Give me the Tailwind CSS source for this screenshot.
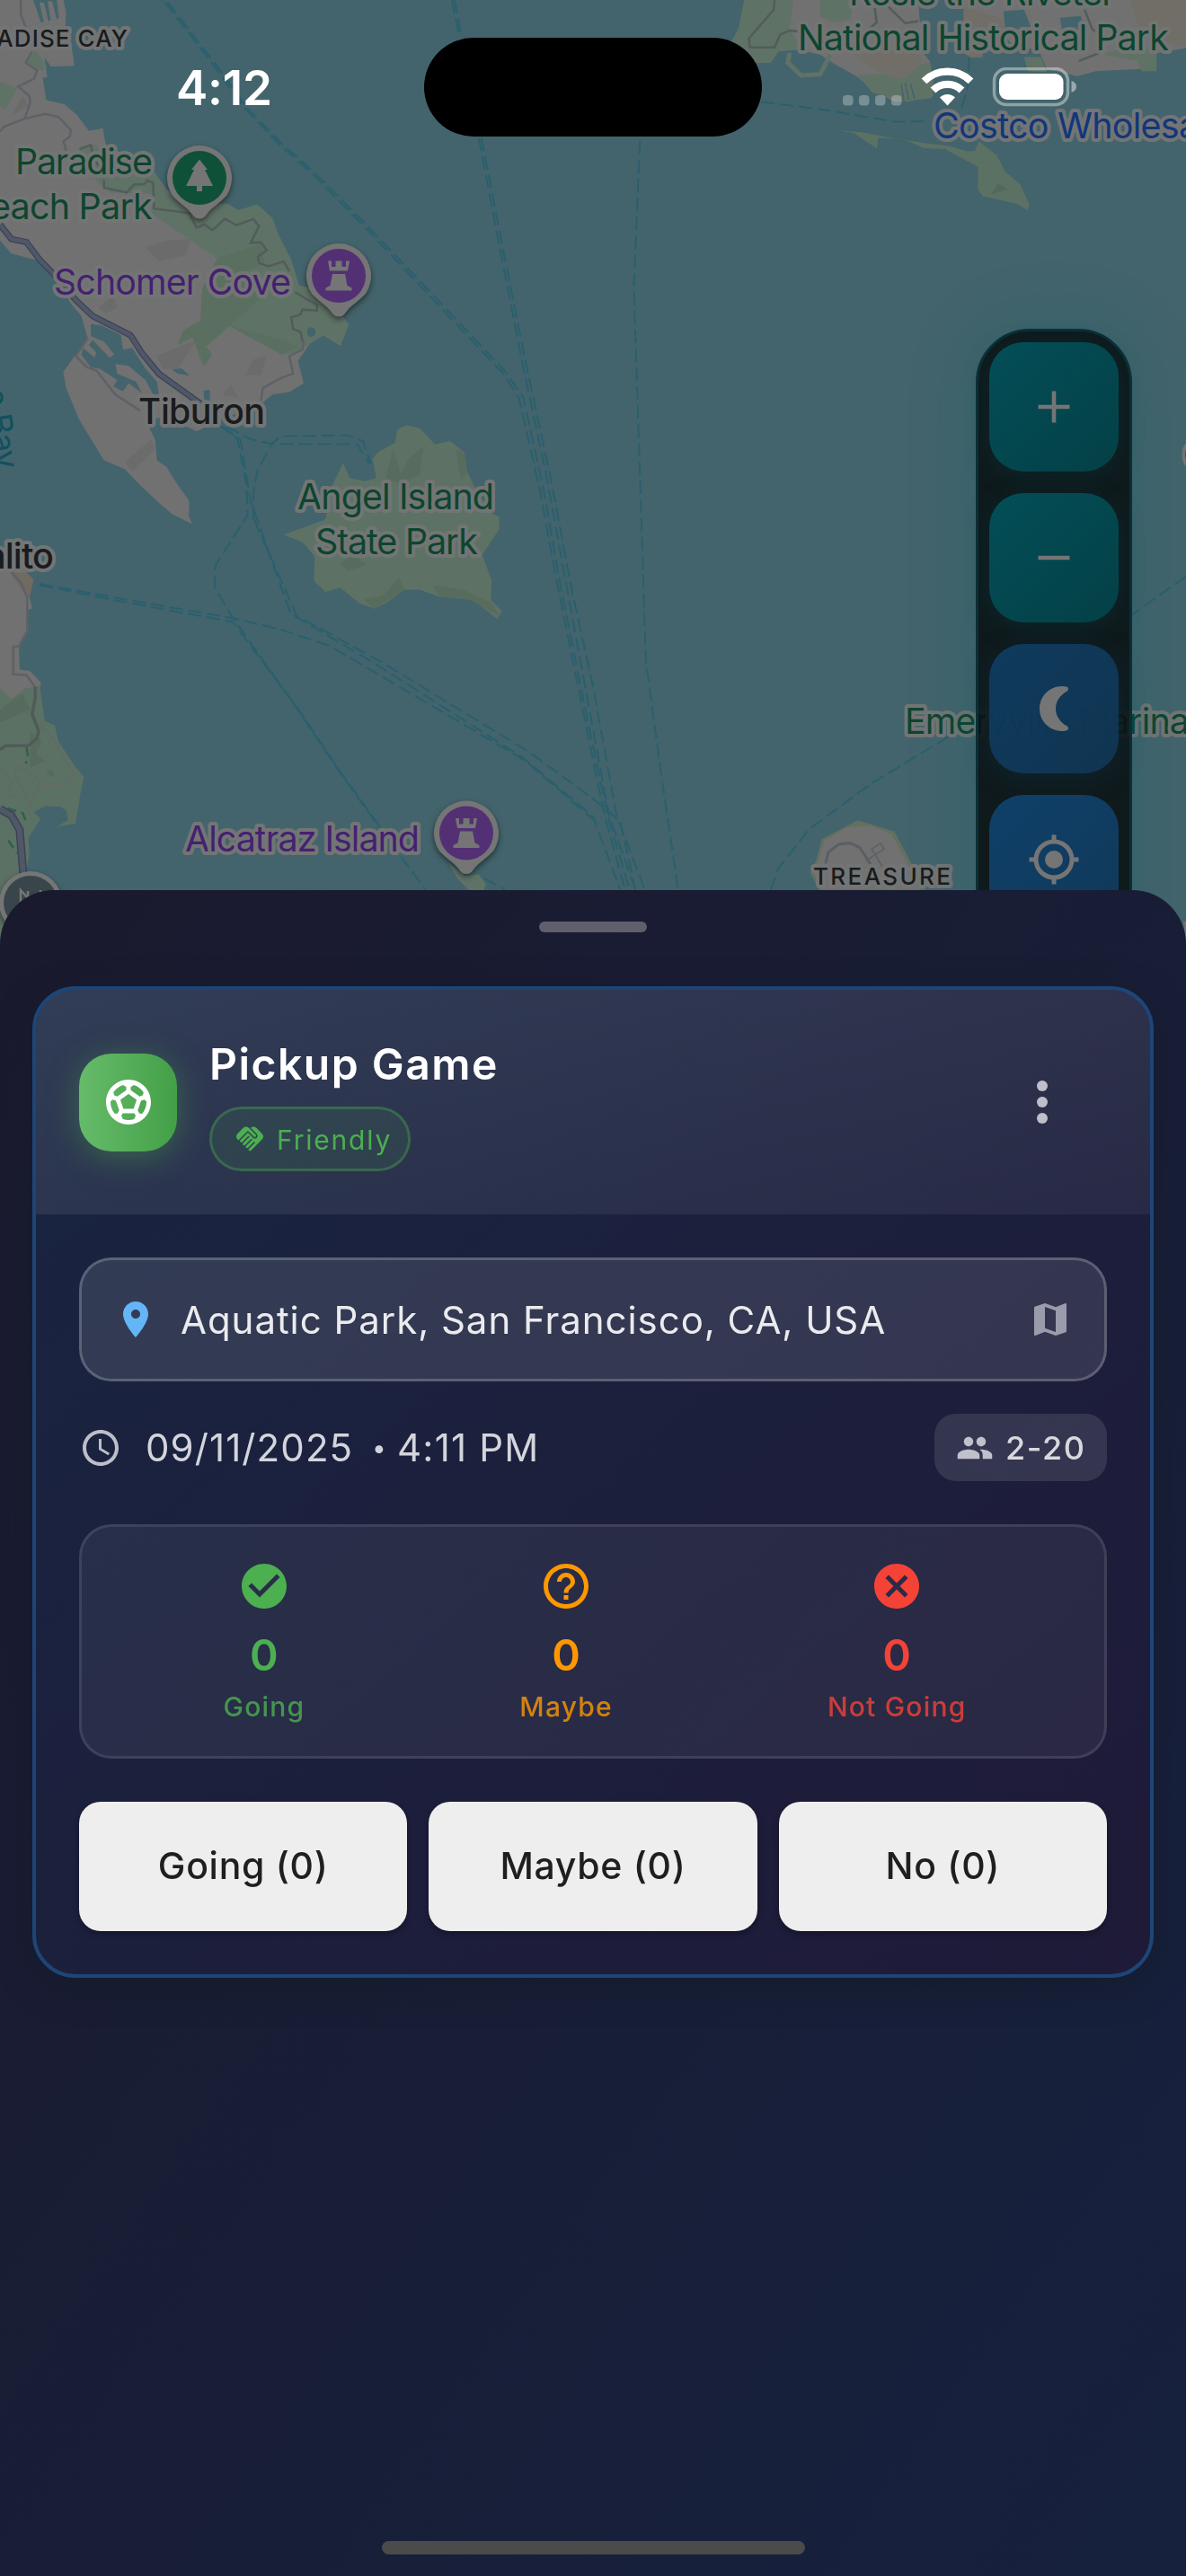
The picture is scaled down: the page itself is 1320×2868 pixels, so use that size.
<!DOCTYPE html>
<html lang="en">
<head>
<meta charset="utf-8">
<title>Pickup Game</title>
<script src="https://cdn.jsdelivr.net/npm/@tailwindcss/browser@4"></script>
</head>
<body class="bg-[#1a1a2e] font-['Inter',sans-serif]">
<div class="relative flex h-[2868px] w-[1320px] flex-col overflow-hidden">

  <!-- Map backdrop -->
  <svg class="absolute left-0 top-0 h-[1060px] w-[1320px]" viewBox="0 0 3136 2968" preserveAspectRatio="none">
    <rect width="3136" height="2968" fill="#43646c"/>
    <!-- Tiburon peninsula -->
    <path fill="#717171" d="M0 0H88L108 70 116 68 104 8 116 8 128 66 134 64 126 4 138 4 150 60 156 56 150 0H168L175 40 172 100 190 150 197 205 135 208 118 180 125 240 113 242 122 312 170 325 205 360 235 408 272 400 280 455 330 480 410 540 440 590 500 640 600 635 630 655 680 638 720 680 735 730 770 810 790 890 830 900 905 985 922 1010 900 1078 855 1045 820 1070 788 1125 803 1195 765 1222 720 1230 690 1260 600 1300 520 1345 440 1300 385 1310 410 1370 415 1435 440 1455 470 1512 500 1560 500 1600 497 1600 508 1634 455 1602 420 1567 370 1512 330 1462 275 1435 210 1310 175 1210 167 1160 200 1105 232 1055 215 985 190 950 150 880 100 812 30 790 0 750Z"/>
    <path fill="#666666" fill-opacity=".5" d="M385 770 440 750 505 745 490 795 420 815ZM30 360 60 300 75 330ZM260 960 300 920 310 960 280 975ZM415 1110 485 1075 520 1060 470 1150 430 1150ZM650 1170 670 1120 705 1110 690 1170ZM590 1230 610 1200 630 1240ZM330 1440 400 1370 410 1400 350 1470Z"/>
    <path fill="#43646c" d="M240 1010 270 1015 320 1045 325 1090 350 1085 385 1150 415 1190 420 1230 405 1230 385 1185 340 1140 305 1135 310 1165 360 1190 375 1225 340 1195 325 1220 300 1205 310 1185 265 1150 240 1145 215 1105 220 1085 250 1115 255 1100 235 1075 245 1060 290 1115 302 1105 275 1065 240 1048ZM455 1152 480 1148 502 1172 470 1165ZM538 1218 555 1215 555 1250 540 1245Z"/>
    <path fill="#5f7266" d="M210 465 250 450 275 475 410 540 440 600 500 640 600 635 630 655 680 638 720 680 735 730 770 810 790 890 830 900 922 1010 900 1078 855 1045 820 1070 788 1100 745 1105 605 1015 545 1080 560 1105 540 1140 525 1110 510 1050 470 1075 485 1030 530 1000 535 900 575 805 400 665 405 605 290 600 240 545ZM70 190 95 158 120 200 115 222 75 205ZM0 255 45 275 15 340 0 330Z"/>
    <path fill="#5a6f5f" d="M575 805 690 760 700 820 640 850 690 930 545 1080 560 1105 540 1140 510 1050 470 1075 485 1030 530 1000 535 900ZM605 1015 745 1060 790 1080 745 1105Z"/>
    <ellipse cx="823" cy="1035" rx="11" ry="15" fill="#43646c"/>
    <g fill="none" stroke="#5e6167" stroke-width="2.5">
      <path vector-effect="non-scaling-stroke" d="M55 0V45L68 85M85 160 68 195 98 220 90 245 48 270 78 300 80 320 65 370 10 395 0 410M65 370 120 355 155 365 187 405 185 425 168 440 175 470M232 1055 200 1110 230 1145 255 1155 305 1230 370 1280M803 1060 800 1090 765 1110 775 1165 740 1180 695 1210 690 1250"/>
      <path vector-effect="non-scaling-stroke" stroke="#525d5a" d="M210 465 240 452 250 500 270 530M275 560 275 585 335 600 355 575 380 575 390 563 405 570 407 650 440 655 475 660 500 665 520 710 540 700 562 717 595 682 625 702 670 683 685 705 663 757 690 755 705 780 682 800 685 820 710 830 750 815 765 845M780 910 800 925 838 950 838 968 800 965 795 980 770 990 775 1025 795 1035 800 1065"/>
    </g>
    <path vector-effect="non-scaling-stroke" fill="none" stroke="#3c4257" stroke-width="7" d="M0 700 30 745 70 755 105 810 155 870 200 935 245 985 345 1045 375 1100 420 1165 530 1258"/>
    <path vector-effect="non-scaling-stroke" fill="none" stroke="#505868" stroke-width="4.5" d="M0 700 30 745 70 755 105 810 155 870 200 935 245 985 345 1045 375 1100 420 1165 530 1258"/>
    <!-- Angel Island -->
    <path fill="#5d7265" d="M1075 1325 1110 1335 1150 1385 1190 1375 1228 1410 1235 1470 1255 1520 1300 1600 1320 1612 1320 1650 1275 1730 1300 1810 1298 1870 1327 1905 1315 1930 1250 1870 1160 1860 1110 1838 1070 1838 1020 1880 990 1898 950 1880 900 1832 860 1845 830 1810 832 1735 800 1690 750 1667 860 1620 880 1510 907 1443 925 1490 965 1500 995 1490 985 1430 1000 1410 1045 1380 1050 1340Z"/>
    <path fill="#586c5e" d="M1040 1400 1060 1480 1080 1430 1120 1390 1110 1480 1060 1510 1020 1490ZM1205 1400 1228 1410 1235 1470 1220 1500ZM1145 1825 1230 1840 1300 1880 1320 1920 1240 1868 1160 1858ZM960 1870 1015 1855 1055 1800 1070 1838 990 1898ZM900 1760 930 1730 970 1760 920 1780Z"/>
    <!-- Alcatraz -->
    <path fill="#5f7266" d="M1185 2690 1230 2730 1265 2725 1285 2755 1280 2775 1240 2775 1210 2740Z"/>
    <!-- Sausalito and headlands -->
    <g transform="translate(0 1512)">
      <path fill="#717171" d="M0 240 60 260 88 295 78 350 85 385 72 390 75 455 50 505 52 575 80 580 108 615 105 640 118 735 0 760Z"/>
      <path fill="#716a60" d="M25 270 72 275 88 295 78 350 68 345Z"/>
      <path fill="#5b7163" d="M0 635 30 668 65 635 105 625 118 735 145 750 155 800 200 880 222 910 213 960 200 1055 148 1066 180 1045 175 1015 160 1003 120 1000 90 1020 108 1040 75 1100 78 1150 70 1200 160 1456H0Z"/>
      <path fill="#566b5c" d="M80 770 110 800 95 840 120 860 80 880ZM0 700 60 650 80 700 0 740ZM120 900 135 885 145 910Z"/>
      <g fill="none" stroke="#5e6167" stroke-width="2.5">
        <path vector-effect="non-scaling-stroke" d="M30 270 55 305 72 350V455L50 502 35 505V590L70 592 93 630"/>
        <path vector-effect="non-scaling-stroke" stroke="#505b58" stroke-width="3.5" d="M93 630V665L85 715 102 765 98 790 75 812 15 813 0 825"/>
        <path vector-effect="non-scaling-stroke" stroke="#646964" stroke-width="1.5" d="M100 740 130 775 150 810 170 850 195 900 180 933H105L80 998 38 900 50 877 95 910 105 933M0 880 30 920V945L15 965 40 975"/>
      </g>
      <path vector-effect="non-scaling-stroke" fill="none" stroke="#3c4257" stroke-width="9" d="M0 1010 30 1030 52 1075 62 1220"/>
      <path vector-effect="non-scaling-stroke" fill="none" stroke="#505868" stroke-width="6" d="M0 1010 30 1030 52 1075 62 1220"/>
    </g>
    <!-- Richmond shoreline -->
    <g transform="translate(1568 0)">
      <path fill="#717171" d="M400 0 385 90 365 130 430 195 470 195 490 160 540 155 600 170 640 200 700 240 750 290 800 318 895 305 900 250 890 190 870 160 860 0H980V165L1000 180 1030 178 1030 110 1090 95 1100 130 1180 160 1200 215 1280 238 1330 222 1450 215 1490 222 1490 165 1568 150V0Z"/>
      <path fill="#5f7266" d="M400 0H530L520 90 550 150 490 160 470 195 430 197 365 130 385 90ZM600 0H690L680 60 640 70 600 50ZM700 235 760 230 820 245 870 200 892 195 900 300 830 318 740 290ZM1140 178H1185L1200 225 1150 222ZM1400 150H1490V222H1450L1440 190 1350 170Z"/>
      <path fill="#716d67" d="M690 170 800 160 865 170 868 200 825 245 770 235ZM980 20 1085 60V100L1030 130V178H1000L980 160ZM1420 0H1568V150L1450 110Z"/>
      <path fill="#43646c" d="M1235 55 1290 50 1300 95 1240 95ZM1085 35 1140 30 1160 90 1090 92Z"/>
      <path vector-effect="non-scaling-stroke" fill="none" stroke="#525d5a" stroke-width="2.5" d="M480 0 478 30 412 120 415 148 480 148 495 108 520 95 560 100M745 25 750 70 700 120M1300 30 1320 90 1350 120 1350 160 1285 190M780 20 825 72 860 66"/>
      <path vector-effect="non-scaling-stroke" fill="none" stroke="#5f7266" stroke-width="5" d="M520 165 515 195 550 235 600 232 628 170"/>
      <path vector-effect="non-scaling-stroke" fill="none" stroke="#43646c" stroke-width="1.5" d="M815 262 822 315M825 258 835 310M840 262 850 308"/>
      <path fill="#5b7163" d="M650 407 690 415 750 463 755 430 820 433 875 462 930 465 1018 520V590L1030 612 1120 635 1148 655 1155 640 1130 575 1090 535 1068 485 1020 440 1010 470 990 472 940 455 870 445 780 428 710 412Z"/>
      <path fill="#54695a" d="M1070 572 1098 590 1052 606Z"/>
    </g>
    <!-- Treasure Island -->
    <g transform="translate(1568 1512)">
      <path fill="#64705f" d="M700 1045 797 1080 842 1180 880 1262H598L575 1210 590 1170 606 1103Z"/>
      <path fill="#717171" d="M670 1068 735 1062 790 1090 832 1180 865 1262H605L583 1210 600 1160 612 1108Z"/>
      <path vector-effect="non-scaling-stroke" fill="none" stroke="#5b5e64" stroke-width="3" d="M615 1180 622 1145 650 1120 680 1116 705 1130 725 1165 735 1185"/>
      <path vector-effect="non-scaling-stroke" fill="none" stroke="#5b5e64" stroke-width="1.5" d="M722 1170 770 1135 760 1117 737 1135 747 1153 765 1190"/>
      <path fill="#717171" d="M1560 1360H1580V1420H1568Z"/>
    </g>
    <!-- Ferry routes -->
    <g fill="none" stroke="#2a5f6e" stroke-width="2" stroke-dasharray="15 6">
      <path vector-effect="non-scaling-stroke" d="M437 8 572 215 645 335 740 452 830 547 960 702 1120 902 1330 1164 1372 1240 1428 1530 1470 1800 1530 2150 1598 2540 1653 2774"/>
      <path vector-effect="non-scaling-stroke" d="M444 8 578 212 652 335 745 448 836 543 966 698 1126 896 1336 1158 1384 1240 1438 1530 1478 1800 1537 2150 1606 2540 1665 2774"/>
      <path vector-effect="non-scaling-stroke" d="M1195 0 1213 105M1266 430 1326 800 1381 1130 1446 1490 1500 1840 1555 2190 1610 2540 1680 2774"/>
      <path vector-effect="non-scaling-stroke" d="M1202 0 1220 112M1273 430 1334 800 1390 1130 1456 1490 1512 1840 1568 2140 1630 2540 1705 2774"/>
      <path vector-effect="non-scaling-stroke" d="M1692 440 1676 900 1693 1512 1708 2062 1748 2412 1793 2774"/>
      <path vector-effect="non-scaling-stroke" d="M2013 318 2168 340 2368 380 2453 378M2563 180 2558 280 2540 345"/>
      <path vector-effect="non-scaling-stroke" d="M580 1325 628 1368 652 1512 655 1605 570 1762 567 1830 615 1925 780 2200 900 2410 1010 2590 1125 2774"/>
      <path vector-effect="non-scaling-stroke" d="M590 1330 636 1372 662 1560 768 1912 1000 2075 1380 2360 1568 2545 1640 2774"/>
      <path vector-effect="non-scaling-stroke" d="M670 1620 670 1540 680 1470 720 1380 745 1360 920 1357 960 1375 980 1445M600 1330 660 1368 720 1384 945 1385 975 1445"/>
      <path vector-effect="non-scaling-stroke" d="M672 1620 785 1920 1010 2065 1400 2345 1568 2490 1640 2560 1680 2774M105 1820 300 1862 615 1927 740 1962 870 2012 1000 2102 1390 2372 1568 2555M105 1824 300 1870 615 1939 786 2206 906 2416 1016 2596"/>
      <path vector-effect="non-scaling-stroke" d="M3136 1797 2998 1912 2880 2000M2508 2297 2298 2447 2138 2587 2058 2707 2038 2774M1280 2737 1335 2774"/>
    </g>
    <g fill="none" stroke="#315f4c" stroke-width="2.5" stroke-dasharray="10 6">
      <path vector-effect="non-scaling-stroke" d="M70 2330 75 2365 68 2380M20 2520 60 2535 72 2570M22 2620 45 2660"/>
    </g>
  </svg>

  <!-- Map labels and pins -->
  <svg class="absolute left-0 top-0 h-[1060px] w-[1320px]" viewBox="0 0 1320 1060">
    <defs>
      <g id="pin">
        <path d="M0 45.500C-3 45.500-5 44.500-7 42-14 32-22 29-30 20A36 36 0 1 1 30 20C22 29 14 32 7 42 5 44.500 3 45.500 0 45.500Z" fill="#757575"/>
      </g>
      <g id="rook" fill="#757575">
        <path d="M-12-16.500H-8V-10H-3.500V-16.500H3.500V-10H8V-16.500H12L10-5.500H-10ZM-7-2H7L9.500 11 14.500 13.500V16.500H-14.500V13.500L-9.500 11Z"/>
      </g>
    </defs>
    <g font-size="39.500" stroke="#737575" stroke-width="8" stroke-linejoin="round" paint-order="stroke" fill="#0d452f">
      <text x="17" y="193.500" textLength="153">Paradise</text>
      <text x="169" y="244" text-anchor="end" letter-spacing="-.8">Beach Park</text>
      <text x="60" y="327.500" textLength="264" fill="#442170">Schomer Cove</text>
      <text x="331" y="566.500" textLength="219">Angel Island</text>
      <text x="351" y="617" textLength="181">State Park</text>
      <text x="206" y="948" textLength="261" fill="#442170">Alcatraz Island</text>
      <text x="945" y="5.500" textLength="296">Rosie the Riveter</text>
      <text x="888" y="56" textLength="413">National Historical Park</text>
      <text x="1039" y="153.500" fill="#12377a" letter-spacing="-.75">Costco Wholesale</text>
      <text x="1007" y="817" textLength="317">Emeryville Marina</text>
      <text x="1317" y="521">G</text>
      <g fill="#1a1b1d" font-weight="500">
        <text x="154" y="472" textLength="141">Tiburon</text>
        <text x="59" y="633" text-anchor="end" letter-spacing="-.9">Sausalito</text>
        <text x="143" y="52" font-size="26" text-anchor="end" letter-spacing="1.1">PARADISE CAY</text>
        <text x="905" y="985" font-size="26" textLength="153">TREASURE</text>
      </g>
    </g>
    <text transform="translate(-18 434) rotate(81)" font-size="36" letter-spacing="-1" fill="#12505f">e Bay</text>
    <g class="drop-shadow-[0_3px_3px_rgba(0,0,0,0.5)]">
      <use href="#pin" x="222" y="198"/>
      <use href="#pin" x="377" y="307"/>
      <use href="#pin" x="519" y="927.500"/>
      <circle cx="34" cy="1005" r="35" fill="#757575"/>
    </g>
    <circle cx="222" cy="198" r="30" fill="#0f5138"/>
    <path d="M222 177.500 231 189H228L237 207H225V213H219V207H207L216 189H213Z" fill="#757575"/>
    <circle cx="377" cy="307" r="30" fill="#533074"/><use href="#rook" x="377" y="307"/>
    <circle cx="519" cy="927.500" r="30" fill="#533074"/><use href="#rook" x="519" y="927.500"/>
    <circle cx="34" cy="1005" r="30" fill="#38464c"/>
    <path d="M23 1006V991L31 1000V992M40 1000V996M45 998V991" stroke="#757575" stroke-width="2.500" fill="none"/>
  </svg>

  <!-- Map controls -->
  <div class="absolute left-[1086px] top-[366px] flex h-[820px] w-[174px] flex-col items-center gap-6 rounded-[60px] border-[3px] border-[#0b2f35] bg-[#060d0e]/85 pt-3 shadow-[0_0_70px_8px_rgba(0,95,105,0.2)]">
    <div class="flex size-36 shrink-0 items-center justify-center rounded-[38px] bg-linear-to-br from-[#034e58] to-[#044046] shadow-[0_6px_28px_rgba(10,60,70,0.35)]">
      <svg class="size-9" viewBox="0 0 36 36"><path d="M18 .5V35.500M.5 18H35.500" stroke="#757575" stroke-width="4.600"/></svg>
    </div>
    <div class="flex size-36 shrink-0 items-center justify-center rounded-[38px] bg-linear-to-br from-[#034e58] to-[#044046] shadow-[0_6px_28px_rgba(10,60,70,0.35)]">
      <svg class="size-9" viewBox="0 0 36 36"><path d="M.5 18H35.500" stroke="#757575" stroke-width="4.600"/></svg>
    </div>
    <div class="flex size-36 shrink-0 items-center justify-center rounded-[38px] bg-linear-to-br from-[#0f4069]/85 to-[#10395a]/85 shadow-[0_6px_28px_rgba(15,55,80,0.35)]">
      <svg class="h-[50px] w-8" viewBox="0 0 32 50"><path fill="#757575" d="M25 0C11.200 0 0 11.200 0 25S11.200 50 25 50c2.300 0 4-.3 5.500-.8 2-.8 2-3.500.3-4.600C22.500 40 18 33 18 25S22.500 10 30.800 5.400c1.700-1.100 1.700-3.800-.3-4.600C29 .3 27.300 0 25 0Z"/></svg>
    </div>
    <div class="flex size-36 shrink-0 items-center justify-center rounded-[38px] bg-linear-to-br from-[#0f4069] to-[#10395a]">
      <svg class="size-[60px]" viewBox="0 0 24 24" fill="none" stroke="#757575" stroke-width="2"><circle cx="12" cy="12" r="8"/><circle cx="12" cy="12" r="4" fill="#757575" stroke="none"/><path d="M12 1V4M12 20V23M1 12H4M20 12H23"/></svg>
    </div>
  </div>

  <!-- Status bar -->
  <header class="relative flex h-[991px] shrink-0 items-start pl-[196px] pr-[121px] pt-[42px]">
    <div class="h-[110px] w-[276px] pt-[24px] text-[53px] font-semibold leading-[64px] tracking-[-0.2px] text-white">4:12</div>
    <div class="h-[110px] w-[376px] rounded-full bg-black"></div>
    <svg class="mt-[33px] ml-auto h-11 w-[262px]" viewBox="0 0 262 44">
      <g fill="#fff" fill-opacity=".28"><rect x="1" y="31" width="11.500" height="11.500" rx="4"/><rect x="19" y="31" width="11.500" height="11.500" rx="4"/><rect x="37" y="31" width="11.500" height="11.500" rx="4"/><rect x="55" y="31" width="11.500" height="11.500" rx="4"/></g>
      <g fill="none" stroke="#fff" stroke-width="8.200"><path d="M91.500 15.300A37 37 0 0 1 143.500 15.300"/><path d="M101.500 25.500A22.500 22.500 0 0 1 133.500 25.500"/></g>
      <path fill="#fff" d="M117.500 42.500 109 33.500A12 12 0 0 1 126 33.500Z"/>
      <rect x="169.500" y="1.500" width="82" height="40" rx="13.500" fill="none" stroke="#fff" stroke-opacity=".4" stroke-width="3.500"/>
      <rect x="175" y="7" width="71.500" height="29" rx="9" fill="#fff"/>
      <path fill="#fff" fill-opacity=".45" d="M255.500 15C259 16 261 18.500 261 21.500S259 27 255.500 28Z"/>
    </svg>
  </header>

  <!-- Bottom sheet -->
  <main class="relative flex grow flex-col items-center rounded-t-[60px] bg-linear-to-br from-[#1a1a2e] to-[#16213e] px-9 pt-[35px]">
    <div class="h-3 w-[120px] rounded-full bg-[#5f5f6d]"></div>

    <section class="mt-[60px] flex w-full flex-col overflow-hidden rounded-[48px] border-4 border-[#1d4677] bg-linear-to-br from-[#182541] to-[#1e1a38] shadow-[0_12px_36px_rgba(20,26,40,0.6)]">
      <div class="flex h-[250px] items-center bg-linear-to-br from-white/11 to-white/5 px-12">
        <div class="flex size-[109px] items-center justify-center rounded-[36px] bg-linear-to-r from-[#66bb6a] to-[#43a047] shadow-[0_6px_36px_rgba(76,175,80,0.4)]">
          <svg class="size-[60px]" viewBox="0 0 24 24" fill="#fff"><path d="M12 2C6.480 2 2 6.480 2 12s4.480 10 10 10 10-4.480 10-10S17.520 2 12 2zm1 3.300l1.350-.95c1.820.56 3.370 1.760 4.380 3.340l-.39 1.340-1.350.46L13 6.700V5.300zm-3.350-.95L11 5.300v1.400L7.010 9.490l-1.350-.46-.39-1.340c1.010-1.570 2.560-2.770 4.380-3.340zM7.080 17.110l-1.140.1C4.730 15.810 4 13.990 4 12c0-.12.01-.23.02-.35l1-.73 1.380.48 1.460 4.340-.78 1.370zm7.420 2.480c-.79.26-1.630.41-2.500.41s-1.710-.15-2.500-.41l-.69-1.490.64-1.100h5.110l.64 1.110-.7 1.480zM14.270 15H9.730l-1.350-4.020L12 8.440l3.630 2.540L14.270 15zm3.790 2.210l-1.140-.1-.79-1.370 1.460-4.340 1.390-.47 1 .73c.01.11.02.22.02.34 0 1.990-.73 3.810-1.940 5.210z"/></svg>
        </div>
        <div class="ml-9 flex flex-col items-start gap-6">
          <h1 class="h-[58px] whitespace-nowrap text-[48px] font-semibold leading-[70px] tracking-[1.5px] text-white">Pickup Game</h1>
          <div class="flex h-[72px] w-[224px] items-center gap-3 rounded-[36px] border-[3px] border-[#4caf50]/35 bg-[#4caf50]/12 pl-6">
            <svg class="size-9" viewBox="0 0 24 24" fill="#4caf50"><path d="M16.480 10.410c-.39.39-1.040.39-1.430 0l-4.470-4.460-7.050 7.040-.66-.63c-1.170-1.170-1.170-3.070 0-4.240l4.240-4.240c1.170-1.170 3.070-1.170 4.240 0L16.480 9c.39.39.39 1.020 0 1.410zm.7-2.120c.78.78.78 2.050 0 2.830-1.270 1.270-2.610.22-2.830 0l-3.760-3.760-5.570 5.570c-.39.39-.39 1.020 0 1.410.39.39 1.020.39 1.420 0l4.620-4.620.71.71-4.620 4.620c-.39.39-.39 1.020 0 1.410.39.39 1.020.39 1.420 0l4.620-4.620.71.71-4.620 4.620c-.39.39-.39 1.020 0 1.410.39.39 1.020.39 1.410 0l4.620-4.620.71.71-4.620 4.620c-.39.39-.39 1.020 0 1.410.39.39 1.020.39 1.410 0l8.320-8.340c1.170-1.170 1.170-3.070 0-4.240l-4.240-4.240c-1.150-1.150-3.010-1.170-4.180-.06l4.470 4.470z"/></svg>
            <span class="pt-[2px] text-[30px] tracking-[1.8px] text-[#4caf50]">Friendly</span>
          </div>
        </div>
        <div class="ml-auto flex w-36 flex-col items-center gap-1.5">
          <i class="size-3 rounded-full bg-[#bfbfc9]"></i><i class="size-3 rounded-full bg-[#bfbfc9]"></i><i class="size-3 rounded-full bg-[#bfbfc9]"></i>
        </div>
      </div>

      <div class="flex flex-col p-12">
        <div class="flex h-[138px] items-center rounded-[36px] border-[3px] border-white/20 bg-white/11 px-9">
          <svg class="size-12" viewBox="0 0 24 24" fill="#64b5f6"><path d="M12 2C8.130 2 5 5.130 5 9c0 5.250 7 13 7 13s7-7.750 7-13c0-3.870-3.130-7-7-7zm0 9.500c-1.380 0-2.500-1.120-2.500-2.500s1.120-2.500 2.500-2.500 2.500 1.120 2.500 2.500-1.120 2.500-2.500 2.500z"/></svg>
          <span class="ml-6 grow whitespace-nowrap pl-[2px] text-[42px] tracking-[0.95px] text-[#ebebee]">Aquatic Park, San Francisco, CA, USA</span>
          <svg class="size-12" viewBox="0 0 24 24" fill="#9a9bab"><path d="M20.500 3l-.16.03L15 5.100 9 3 3.360 4.900c-.21.07-.36.25-.36.48V20.500c0 .28.22.5.5.5l.16-.03L9 18.900l6 2.100 5.640-1.900c.21-.07.36-.25.36-.48V3.500c0-.28-.22-.5-.5-.5zM15 19l-6-2.110V5l6 2.110V19z"/></svg>
        </div>

        <div class="mt-9 flex h-[75px] items-center">
          <svg class="size-12" viewBox="0 0 24 24" fill="#bdbec8"><path d="M11.990 2C6.470 2 2 6.480 2 12s4.470 10 9.990 10C17.520 22 22 17.520 22 12S17.520 2 11.990 2zM12 20c-4.420 0-8-3.580-8-8s3.580-8 8-8 8 3.580 8 8-3.580 8-8 8zm.5-13H11v6l5.250 3.150.75-1.230-4.500-2.670z"/></svg>
          <div class="ml-6 flex grow items-center whitespace-nowrap pl-[2px] text-[42px] text-[#d4d5dc]">
            <span class="w-[252px] tracking-[1.1px]">09/11/2025</span>
            <span class="w-[28px] text-[28px]">•</span>
            <span class="tracking-[1.2px]">4:11 PM</span>
          </div>
          <div class="flex h-[75px] w-[192px] items-center rounded-[24px] bg-white/11 pl-6">
            <svg class="size-[42px]" viewBox="0 0 24 24" fill="#c1c1cb"><path d="M16 11c1.660 0 2.990-1.340 2.990-3S17.660 5 16 5s-3 1.340-3 3 1.340 3 3 3zm-8 0c1.660 0 2.990-1.340 2.990-3S9.660 5 8 5 5 6.340 5 8s1.340 3 3 3zm0 2c-2.330 0-7 1.170-7 3.500V19h14v-2.500C15 14.170 10.330 13 8 13zm8 0c-.29 0-.62.02-.97.05 1.160.84 1.970 1.970 1.970 3.450V19h6v-2.500c0-2.330-4.670-3.500-7-3.500z"/></svg>
            <span class="ml-[13px] whitespace-nowrap text-[36px] font-medium tracking-[1.6px] text-[#d8d8de]">2-20</span>
          </div>
        </div>

        <div class="mt-12 flex h-[261px] justify-around rounded-[36px] border-[3px] border-white/10 bg-white/6 py-9 pl-[38px] pr-[34px]">
          <div class="flex flex-col items-center text-[#4caf50]">
            <svg class="size-[60px]" viewBox="0 0 24 24" fill="currentColor"><path d="M12 2C6.480 2 2 6.480 2 12s4.480 10 10 10 10-4.480 10-10S17.520 2 12 2zm-2 15l-5-5 1.410-1.410L10 14.170l7.590-7.590L19 8l-9 9z"/></svg>
            <b class="mt-3 text-[48px] font-semibold leading-[70px]">0</b>
            <span class="mt-1 text-[30px] font-medium leading-9 tracking-[1.2px] opacity-80">Going</span>
          </div>
          <div class="flex flex-col items-center text-[#ff9800]">
            <svg class="size-[60px]" viewBox="0 0 24 24" fill="currentColor"><path d="M11 18h2v-2h-2v2zm1-16C6.480 2 2 6.480 2 12s4.480 10 10 10 10-4.480 10-10S17.520 2 12 2zm0 18c-4.410 0-8-3.590-8-8s3.590-8 8-8 8 3.590 8 8-3.590 8-8 8zm0-14c-2.210 0-4 1.790-4 4h2c0-1.100.9-2 2-2s2 .9 2 2c0 2-3 1.750-3 5h2c0-2.250 3-2.500 3-5 0-2.210-1.790-4-4-4z"/></svg>
            <b class="mt-3 text-[48px] font-semibold leading-[70px]">0</b>
            <span class="mt-1 text-[30px] font-medium leading-9 tracking-[1.2px] opacity-80">Maybe</span>
          </div>
          <div class="flex flex-col items-center text-[#f44336]">
            <svg class="size-[60px]" viewBox="0 0 24 24" fill="currentColor"><path d="M12 2C6.470 2 2 6.470 2 12s4.470 10 10 10 10-4.470 10-10S17.530 2 12 2zm5 13.590L15.590 17 12 13.410 8.410 17 7 15.590 10.590 12 7 8.410 8.410 7 12 10.590 15.590 7 17 8.410 13.410 12 17 15.590z"/></svg>
            <b class="mt-3 text-[48px] font-semibold leading-[70px]">0</b>
            <span class="mt-1 text-[30px] font-medium leading-9 tracking-[1.2px] opacity-80">Not Going</span>
          </div>
        </div>

        <div class="mt-12 grid h-36 grid-cols-3 gap-6 text-[41px] font-medium tracking-[0.7px] text-[#1f1f1f]">
          <button class="rounded-[24px] bg-[#eeeeee] shadow-[0_3px_6px_rgba(0,0,0,0.3)]">Going (0)</button>
          <button class="rounded-[24px] bg-[#eeeeee] shadow-[0_3px_6px_rgba(0,0,0,0.3)]">Maybe (0)</button>
          <button class="rounded-[24px] bg-[#eeeeee] shadow-[0_3px_6px_rgba(0,0,0,0.3)]">No (0)</button>
        </div>
      </div>
    </section>

    <div class="mb-6 mt-auto h-[15px] w-[471px] rounded-full bg-[#4b4b4b]"></div>
  </main>
</div>
</body>
</html>
